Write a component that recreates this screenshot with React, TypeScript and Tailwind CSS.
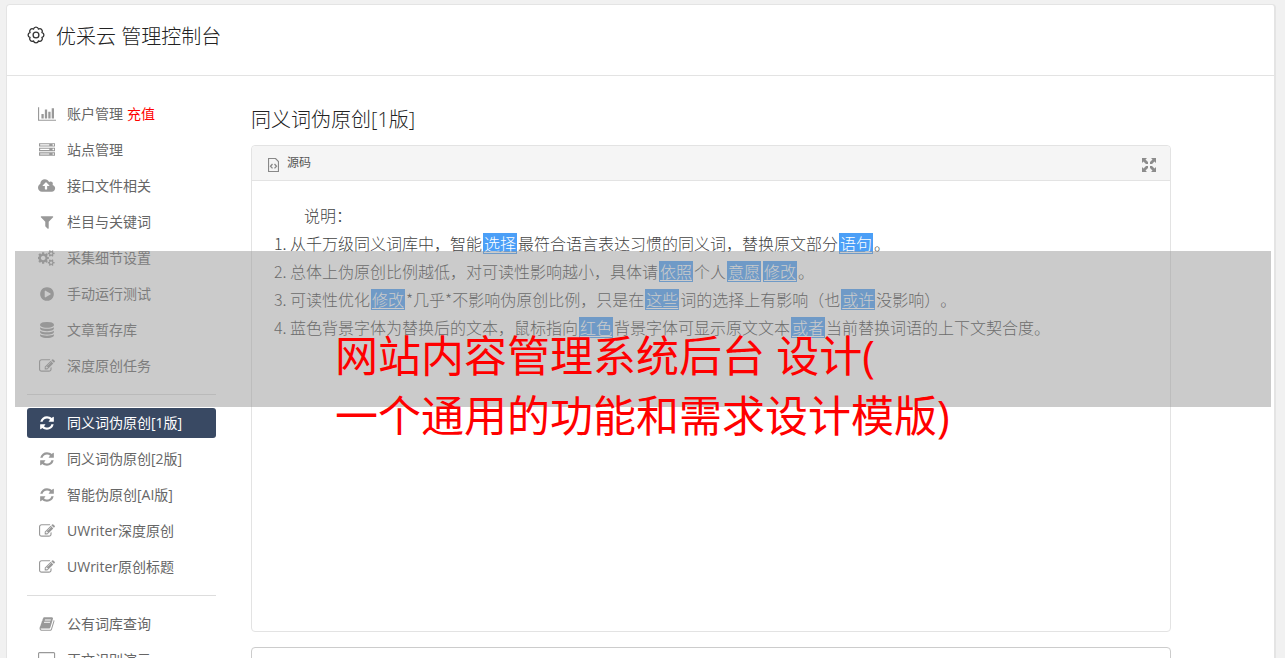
import type { ReactNode } from 'react'

type IconName =
  | 'chart' | 'server' | 'upload' | 'filter' | 'cogs' | 'play'
  | 'database' | 'edit' | 'refresh' | 'book' | 'desktop'

const icons: Record<IconName, { w: number; d: string }> = {
  chart: { w: 2048, d: 'M640 896v512h-256v-512h256zm384-512v1024h-256v-1024h256zm1024 1152v128h-2048v-1536h128v1408h1920zm-640-896v768h-256v-768h256zm384-384v1152h-256v-1152h256z' },
  server: { w: 1792, d: 'M128 1408h1024v-128h-1024v128zm0-512h1024v-128h-1024v128zm1568 448q0-40-28-68t-68-28-68 28-28 68 28 68 68 28 68-28 28-68zm-1568-960h1024v-128h-1024v128zm1568 448q0-40-28-68t-68-28-68 28-28 68 28 68 68 28 68-28 28-68zm0-512q0-40-28-68t-68-28-68 28-28 68 28 68 68 28 68-28 28-68zm96 832v384h-1792v-384h1792zm0-512v384h-1792v-384h1792zm0-512v384h-1792v-384h1792z' },
  upload: { w: 1920, d: 'M1280 864q0-14-9-23l-352-352q-9-9-23-9t-23 9l-351 351q-10 12-10 24 0 14 9 23t23 9h224v352q0 13 9.5 22.5t22.5 9.5h192q13 0 22.5-9.5t9.5-22.5v-352h224q13 0 22.5-9.5t9.5-22.5zm640 288q0 159-112.5 271.5t-271.5 112.5h-1088q-185 0-316.5-131.5t-131.5-316.5q0-130 70-240t188-165q-2-30-2-43 0-212 150-362t362-150q156 0 285.5 87t188.5 231q71-62 166-62 106 0 181 75t75 181q0 76-41 138 130 31 213.5 135.5t83.5 238.5z' },
  filter: { w: 1792, d: 'M1595 295q17 41-14 70l-493 493v742q0 42-39 59-13 5-25 5-27 0-45-19l-256-256q-19-19-19-45v-486l-493-493q-31-29-14-70 17-39 59-39h1280q42 0 59 39z' },
  cogs: { w: 1920, d: 'M832 896q0-106-75-181t-181-75-181 75-75 181 75 181 181 75 181-75 75-181zm768 512q0-52-38-90t-90-38-90 38-38 90q0 53 37.5 90.5t90.5 37.5 90.5-37.5 37.5-90.5zm0-1024q0-52-38-90t-90-38-90 38-38 90q0 53 37.5 90.5t90.5 37.5 90.5-37.5 37.5-90.5zm-384 421v185q0 10-7 19.5t-16 10.5l-155 24q-11 35-32 76 34 48 90 115 7 11 7 20 0 12-7 19-23 30-82.5 89.5t-78.5 59.5q-11 0-21-7l-115-90q-37 19-77 31-11 108-23 155-7 24-30 24h-186q-11 0-20-7.5t-10-17.5l-23-153q-34-10-75-31l-118 89q-7 7-20 7-11 0-21-8-144-133-144-160 0-9 7-19 10-14 41-53t47-61q-23-44-35-82l-152-24q-10-1-17-9.5t-7-19.5v-185q0-10 7-19.5t16-10.5l155-24q11-35 32-76-34-48-90-115-7-11-7-20 0-12 7-20 22-30 82-89t79-59q11 0 21 7l115 90q34-18 77-32 11-108 23-154 7-24 30-24h186q11 0 20 7.5t10 17.5l23 153q34 10 75 31l118-89q8-7 20-7 11 0 21 8 144 133 144 160 0 8-7 19-12 16-42 54t-45 60q23 48 34 82l152 23q10 2 17 10.5t7 19.5zm640 533v140q0 16-149 31-12 27-30 52 51 113 51 138 0 4-4 7-122 71-124 71-8 0-46-47t-52-68q-20 2-30 2t-30-2q-14 21-52 68t-46 47q-2 0-124-71-4-3-4-7 0-25 51-138-18-25-30-52-149-15-149-31v-140q0-16 149-31 13-29 30-52-51-113-51-138 0-4 4-7 4-2 35-20t59-34 30-16q8 0 46 46.5t52 67.5q20-2 30-2t30 2q51-71 92-112l6-2q4 0 124 70 4 3 4 7 0 25-51 138 17 23 30 52 149 15 149 31zm0-1024v140q0 16-149 31-12 27-30 52 51 113 51 138 0 4-4 7-122 71-124 71-8 0-46-47t-52-68q-20 2-30 2t-30-2q-14 21-52 68t-46 47q-2 0-124-71-4-3-4-7 0-25 51-138-18-25-30-52-149-15-149-31v-140q0-16 149-31 13-29 30-52-51-113-51-138 0-4 4-7 4-2 35-20t59-34 30-16q8 0 46 46.5t52 67.5q20-2 30-2t30 2q51-71 92-112l6-2q4 0 124 70 4 3 4 7 0 25-51 138 17 23 30 52 149 15 149 31z' },
  play: { w: 1792, d: 'M896 128q209 0 385.5 103t279.5 279.5 103 385.5-103 385.5-279.5 279.5-385.5 103-385.5-103-279.5-279.5-103-385.5 103-385.5 279.5-279.5 385.5-103zm384 823q32-18 32-55t-32-55l-544-320q-31-19-64-1-32 19-32 56v640q0 37 32 56 16 8 32 8 17 0 32-9z' },
  database: { w: 1792, d: 'M896 768q237 0 443-43t325-127v170q0 69-103 128t-280 93.5-385 34.5-385-34.5-280-93.5-103-128v-170q119 84 325 127t443 43zm0 768q237 0 443-43t325-127v170q0 69-103 128t-280 93.5-385 34.5-385-34.5-280-93.5-103-128v-170q119 84 325 127t443 43zm0-384q237 0 443-43t325-127v170q0 69-103 128t-280 93.5-385 34.5-385-34.5-280-93.5-103-128v-170q119 84 325 127t443 43zm0-1152q208 0 385 34.5t280 93.5 103 128v128q0 69-103 128t-280 93.5-385 34.5-385-34.5-280-93.5-103-128v-128q0-69 103-128t280-93.5 385-34.5z' },
  edit: { w: 1792, d: 'M888 1184l116-116-152-152-116 116v56h96v96h56zm440-720q-16-16-33 1l-350 350q-17 17-1 33t33-1l350-350q17-17 1-33zm80 594v190q0 119-84.5 203.5t-203.5 84.5h-832q-119 0-203.5-84.5t-84.5-203.5v-832q0-119 84.5-203.5t203.5-84.5h832q63 0 117 25 15 7 18 23 3 17-9 29l-49 49q-14 14-32 8-23-6-45-6h-832q-66 0-113 47t-47 113v832q0 66 47 113t113 47h832q66 0 113-47t47-113v-126q0-13 9-22l64-64q15-15 35-7t20 29zm-96-738l288 288-672 672h-288v-288zm444 132l-92 92-288-288 92-92q28-28 68-28t68 28l152 152q28 28 28 68t-28 68z' },
  refresh: { w: 1792, d: 'M1639 1056q0 5-1 7-64 268-268 434.5t-478 166.5q-146 0-282.5-55t-243.5-157l-129 129q-19 19-45 19t-45-19-19-45v-448q0-26 19-45t45-19h448q26 0 45 19t19 45-19 45l-137 137q71 66 161 102t187 36q134 0 250-65t186-179q11-17 53-117 8-23 30-23h192q13 0 22.5 9.5t9.5 22.5zm25-800v448q0 26-19 45t-45 19h-448q-26 0-45-19t-19-45 19-45l138-138q-148-137-349-137-134 0-250 65t-186 179q-11 17-53 117-8 23-30 23h-199q-13 0-22.5-9.5t-9.5-22.5v-7q65-268 270-434.5t480-166.5q146 0 284 55.5t245 156.5l130-129q19-19 45-19t45 19 19 45z' },
  book: { w: 1792, d: 'M1703 478q40 57 18 129l-275 906q-19 64-76.5 107.5t-122.5 43.5h-923q-77 0-148.5-53.5t-99.5-131.5q-24-67-2-127 0-4 3-27t4-37q1-8-3-21.5t-3-19.5q2-11 8-21t16.5-23.5 16.5-23.5q23-38 45-91.5t30-91.5q3-10 .5-30t-.5-28q3-11 17-28t17-23q21-36 42-92t25-90q1-9-2.5-32t.5-28q4-13 22-30.5t22-22.5q19-26 42.5-84.5t27.5-96.5q1-8-3-25.5t-2-26.5q2-8 9-18t18-23 17-21q8-12 16.5-30.5t15-35 16-36 19.5-32 26.5-23.5 36-11.5 47.5 5.5l-1 3q38-9 51-9h761q74 0 114 56t18 130l-274 906q-36 119-71.5 153.5t-128.5 34.5h-869q-27 0-38 15-11 16-1 43 24 70 144 70h923q29 0 56-15.5t35-41.5l300-987q7-22 5-57 38 15 59 43zm-1064 2q-4 13 2 22.5t20 9.5h608q13 0 25.5-9.5t16.5-22.5l21-64q4-13-2-22.5t-20-9.5h-608q-13 0-25.5 9.5t-16.5 22.5zm-83 256q-4 13 2 22.5t20 9.5h608q13 0 25.5-9.5t16.5-22.5l21-64q4-13-2-22.5t-20-9.5h-608q-13 0-25.5 9.5t-16.5 22.5z' },
  desktop: { w: 1920, d: 'M1792 992v-832q0-13-9.5-22.5t-22.5-9.5h-1600q-13 0-22.5 9.5t-9.500 22.5v832q0 13 9.5 22.5t22.5 9.5h1600q13 0 22.5-9.500t9.500-22.500zm128-832v1088q0 66-47 113t-113 47h-544q0 37 16 77.500t32 71 16 43.500q0 26-19 45t-45 19h-512q-26 0-45-19t-19-45q0-14 16-44t32-70 16-78h-544q-66 0-113-47t-47-113v-1088q0-66 47-113t113-47h1600q66 0 113 47t47 113z' },
}

type Item = { icon: IconName; label: string; extra?: string; active?: boolean }

const groups: Item[][] = [
  [
    { icon: 'chart', label: '账户管理', extra: '充值' },
    { icon: 'server', label: '站点管理' },
    { icon: 'upload', label: '接口文件相关' },
    { icon: 'filter', label: '栏目与关键词' },
    { icon: 'cogs', label: '采集细节设置' },
    { icon: 'play', label: '手动运行测试' },
    { icon: 'database', label: '文章暂存库' },
    { icon: 'edit', label: '深度原创任务' },
  ],
  [
    { icon: 'refresh', label: '同义词伪原创[1版]', active: true },
    { icon: 'refresh', label: '同义词伪原创[2版]' },
    { icon: 'refresh', label: '智能伪原创[AI版]' },
    { icon: 'edit', label: 'UWriter深度原创' },
    { icon: 'edit', label: 'UWriter原创标题' },
  ],
  [
    { icon: 'book', label: '公有词库查询' },
    { icon: 'desktop', label: '正文识别演示' },
  ],
]

function Icon({ name }: { name: IconName }) {
  const { w, d } = icons[name]
  return (
    <svg viewBox={`0 0 ${w} 1792`} className="h-4 w-auto" fill="currentColor" aria-hidden="true">
      <path d={d} />
    </svg>
  )
}

function Gear() {
  return (
    <svg viewBox="0 0 18 18" className="mt-[5px] size-[18px]" fill="none" stroke="currentColor" strokeWidth="1.3" strokeLinejoin="round" aria-hidden="true">
      <path d="M14.910 11.450A2.500 2.500 0 0 1 11.450 14.910A2.500 2.500 0 0 1 6.550 14.910A2.500 2.500 0 0 1 3.090 11.450A2.500 2.500 0 0 1 3.090 6.550A2.500 2.500 0 0 1 6.550 3.090A2.500 2.500 0 0 1 11.450 3.090A2.500 2.500 0 0 1 14.910 6.550A2.500 2.500 0 0 1 14.910 11.450Z" />
      <circle cx="9" cy="9" r="2.900" />
    </svg>
  )
}

// A replaced word
function Word({ children }: { children: ReactNode }) {
  return <span className="mx-px inline-block h-[21px] bg-[#4b9ff7] px-px leading-[21px] text-white underline underline-offset-2">{children}</span>
}

function Sidebar() {
  return (
    <nav className="w-[189px] shrink-0">
      {groups.map((items, i) => (
        <ul key={i} className={`flex flex-col gap-1.5 ${i > 0 ? 'mt-[13px] border-t border-[#ddd] pt-[13px]' : ''}`}>
          {items.map(item => (
            <li key={item.label}>
              <a
                href="#"
                className={`flex h-[30px] items-center rounded-[3px] pl-2 text-sm whitespace-nowrap ${
                  item.active ? 'bg-[#394963] text-white' : 'text-[#666]'
                }`}
              >
                <span className={`mr-2 flex w-6 justify-center ${item.active ? 'text-white' : 'text-[#999]'}`}>
                  <Icon name={item.icon} />
                </span>
                {item.label}
                {item.extra && <span className="ml-1 text-[#f00]">{item.extra}</span>}
              </a>
            </li>
          ))}
        </ul>
      ))}
    </nav>
  )
}

function Editor() {
  return (
    <section className="rounded border border-[#e3e3e3]">
      <div className="flex h-[35px] items-center justify-between rounded-t border-b border-[#e3e3e3] bg-[#f5f5f5] pr-3 pl-4">
        <button className="flex items-center gap-2 text-xs text-[#555]">
          <svg viewBox="0 0 11 14" className="mt-1 h-3.5 w-[11px]" fill="none" stroke="#888" aria-hidden="true">
            <path d="M.5.5h7l3 3v10H.5z" strokeWidth="1.2" />
            <path d="M4.500 6 2.500 8.200l2 2.200M6.500 6l2 2.200-2 2.200" strokeWidth="1.3" />
          </svg>
          源码
        </button>
        <button aria-label="全屏" className="mt-1 mr-0.5 text-[#8c8c8c]">
          <svg viewBox="0 0 14 14" className="size-3.5" fill="currentColor" aria-hidden="true">
            <path d="M0 0h5L3.500 1.500 6 4v2H4L1.500 3.500 0 5zM14 0v5l-1.500-1.500L10 6H8V4l2.500-2.500L9 0zM0 14V9l1.500 1.500L4 8h2v2l-2.500 2.500L5 14zM14 14H9l1.500-1.500L8 10V8h2l2.500 2.500L14 9z" />
          </svg>
        </button>
      </div>
      <div className="min-h-[450px] px-5 pt-5 font-['Noto_Sans_CJK_SC',sans-serif] text-base leading-7 font-light text-[#444] [text-spacing-trim:space-all]">
        <p className="indent-8">说明：</p>
        <ol className="list-decimal pl-[18px]">
          <li>从千万级同义词库中，智能<Word>选择</Word>最符合语言表达习惯的同义词，替换原文部分<Word>语句</Word>。</li>
          <li>总体上伪原创比例越低，对可读性影响越小，具体请<Word>依照</Word>个人<Word>意愿</Word><Word>修改</Word>。</li>
          <li>可读性优化<Word>修改</Word>*几乎*不影响伪原创比例，只是在<Word>这些</Word>词的选择上有影响（也<Word>或许</Word>没影响）。</li>
          <li>蓝色背景字体为替换后的文本，鼠标指向<Word>红色</Word>背景字体可显示原文文本<Word>或者</Word>当前替换词语的上下文契合度。</li>
        </ol>
      </div>
    </section>
  )
}

export default function App() {
  return (
    <div className="h-screen overflow-hidden bg-[#f1f1f1] pt-1 pr-[9px] pl-1.5 font-['Open_Sans','Noto_Sans_CJK_SC',sans-serif]">
      <div className="relative rounded border border-r-2 border-[#e4e4e4] bg-white">
        <header className="flex h-[71px] items-start gap-[11px] border-b border-[#e3e3e3] px-5 pt-4 text-[#333]">
          <Gear />
          <h1 className="text-xl leading-8 font-light text-[#222]">优采云 管理控制台</h1>
        </header>

        <div className="flex gap-[35px] px-5 pt-[23px] pb-6">
          <Sidebar />
          <main className="max-w-[920px] min-w-0 flex-1">
            <h2 className="mt-[5px] mb-[9px] text-xl leading-8 font-light text-[#222]">同义词伪原创[1版]</h2>
            <Editor />
            <textarea aria-label="原文" className="mt-[15px] block h-40 w-full resize-none rounded border border-[#ccc]" />
          </main>
        </div>

        {/* Translucent caption band over the page */}
        <div className="absolute top-[246px] right-[3px] left-2 h-[156px] bg-[#949494]/49 pt-[75px] pl-80">
          <p className="text-[43px] leading-[60px] whitespace-nowrap text-[#f00]">
            网站内容管理系统后台 设计(<br />一个通用的功能和需求设计模版)
          </p>
        </div>
      </div>
    </div>
  )
}
